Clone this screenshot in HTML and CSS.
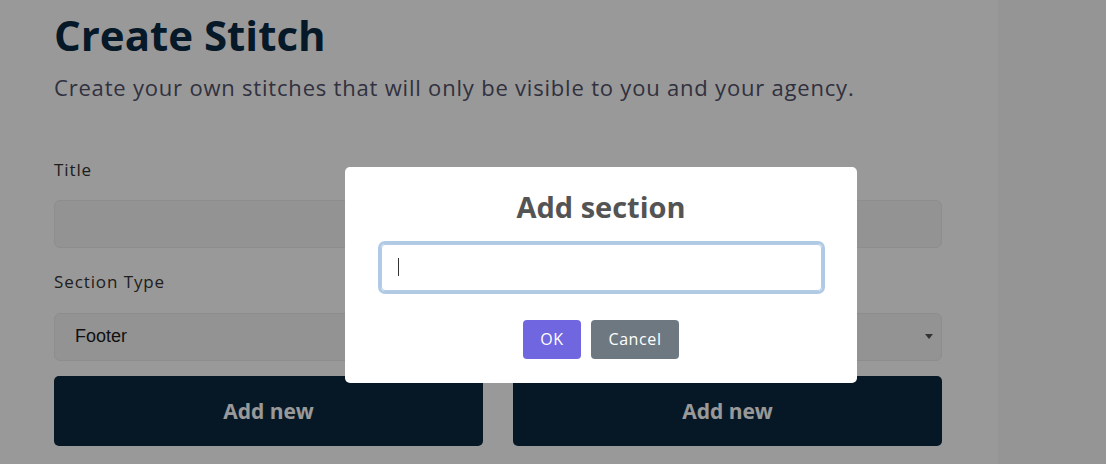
FILE: index.html
```html
<!DOCTYPE html>
<html>
<head>
<meta charset="utf-8">
<link rel="stylesheet" href="styles.css">
</head>
<body>
<div class="page">
  <main class="main">
    <h1 class="title">Create Stitch</h1>
    <p class="subtitle">Create your own stitches that will only be visible to you and your agency.</p>
    <div class="field">
      <label class="label label-first">Title</label>
      <div class="input"></div>
    </div>
    <div class="field">
      <label class="label">Section Type</label>
      <div class="select"><span>Footer</span><i class="arrow"></i></div>
    </div>
    <div class="actions">
      <button class="add-btn">Add new</button>
      <button class="add-btn">Add new</button>
    </div>
  </main>
  <aside class="side"></aside>
</div>
<div class="overlay"></div>
<div class="modal">
  <h2 class="modal-title">Add section</h2>
  <div class="modal-input"><span class="caret"></span></div>
  <div class="modal-actions">
    <button class="btn btn-ok">OK</button>
    <button class="btn btn-cancel">Cancel</button>
  </div>
</div>
</body>
</html>
```
FILE: styles.css
```css
* { box-sizing: border-box; }
html, body { margin: 0; padding: 0; }
body {
  width: 1106px;
  height: 464px;
  overflow: hidden;
  background: #fff;
  font-family: "Open Sans", "Noto Sans", sans-serif;
  position: relative;
}
.page {
  display: flex;
  height: 464px;
}
.main {
  width: 998px;
  padding-left: 54px;
  padding-right: 56px;
  display: flex;
  flex-direction: column;
}
.side {
  flex: 1;
  background: #f8f8f8;
}
.title {
  margin: 10px 0 0;
  font-size: 42px;
  line-height: 1.2;
  font-weight: 700;
  color: #0a2a44;
}
.subtitle {
  margin: 12px 0 0;
  font-size: 22px;
  line-height: 1.4;
  letter-spacing: 0.8px;
  color: #52526a;
}
.field {
  display: flex;
  flex-direction: column;
}
.label {
  font-size: 17px;
  line-height: 1.4;
  letter-spacing: 0.9px;
  color: #333;
  margin: 22px 0 19px;
}
.label-first {
  margin-top: 55px;
  margin-bottom: 18px;
}
.input {
  height: 48px;
  background: #f5f5f5;
  border: 1px solid #ebebeb;
  border-radius: 6px;
}
.select {
  height: 48px;
  background: #f5f5f5;
  border: 1px solid #ebebeb;
  border-radius: 6px;
  display: flex;
  align-items: center;
  justify-content: space-between;
  padding: 0 8px 0 20px;
  font-family: "Liberation Sans", Arial, sans-serif;
  font-size: 18px;
  color: #1c1c1c;
}
.arrow {
  width: 0;
  height: 0;
  border-left: 4px solid transparent;
  border-right: 4px solid transparent;
  border-top: 5px solid #555;
}
.actions {
  display: flex;
  gap: 30px;
  margin-top: 15px;
}
.add-btn {
  flex: 1;
  height: 70px;
  border: 0;
  border-radius: 5px;
  background: #0a2840;
  color: #fff;
  font-family: "Open Sans", sans-serif;
  font-weight: 700;
  font-size: 21px;
}
.overlay {
  position: absolute;
  inset: 0;
  background: rgba(0, 0, 0, 0.4);
}
.modal {
  position: absolute;
  left: 345px;
  top: 167px;
  width: 512px;
  height: 216px;
  background: #fff;
  border-radius: 5px;
  display: flex;
  flex-direction: column;
  align-items: center;
  padding-top: 23px;
}
.modal-title {
  margin: 0;
  font-size: 29px;
  line-height: 1.2;
  font-weight: 700;
  color: #545454;
}
.modal-input {
  margin-top: 19px;
  width: 441px;
  height: 47px;
  border: 1px solid #b4cbe3;
  border-radius: 4px;
  box-shadow: 0 0 0 3px rgba(100, 150, 200, 0.5);
  display: flex;
  align-items: center;
  padding-left: 16px;
}
.caret {
  width: 1px;
  height: 18px;
  background: #333;
}
.modal-actions {
  margin-top: 29px;
  display: flex;
  gap: 10px;
}
.btn {
  height: 39px;
  border: 0;
  border-radius: 4px;
  color: #fff;
  font-family: "Open Sans", sans-serif;
  font-size: 16px;
  font-weight: 500;
  letter-spacing: 0.6px;
  padding: 0;
}
.btn-ok {
  width: 58px;
  background: #7066e0;
}
.btn-cancel {
  width: 88px;
  background: #6e7881;
}
```
